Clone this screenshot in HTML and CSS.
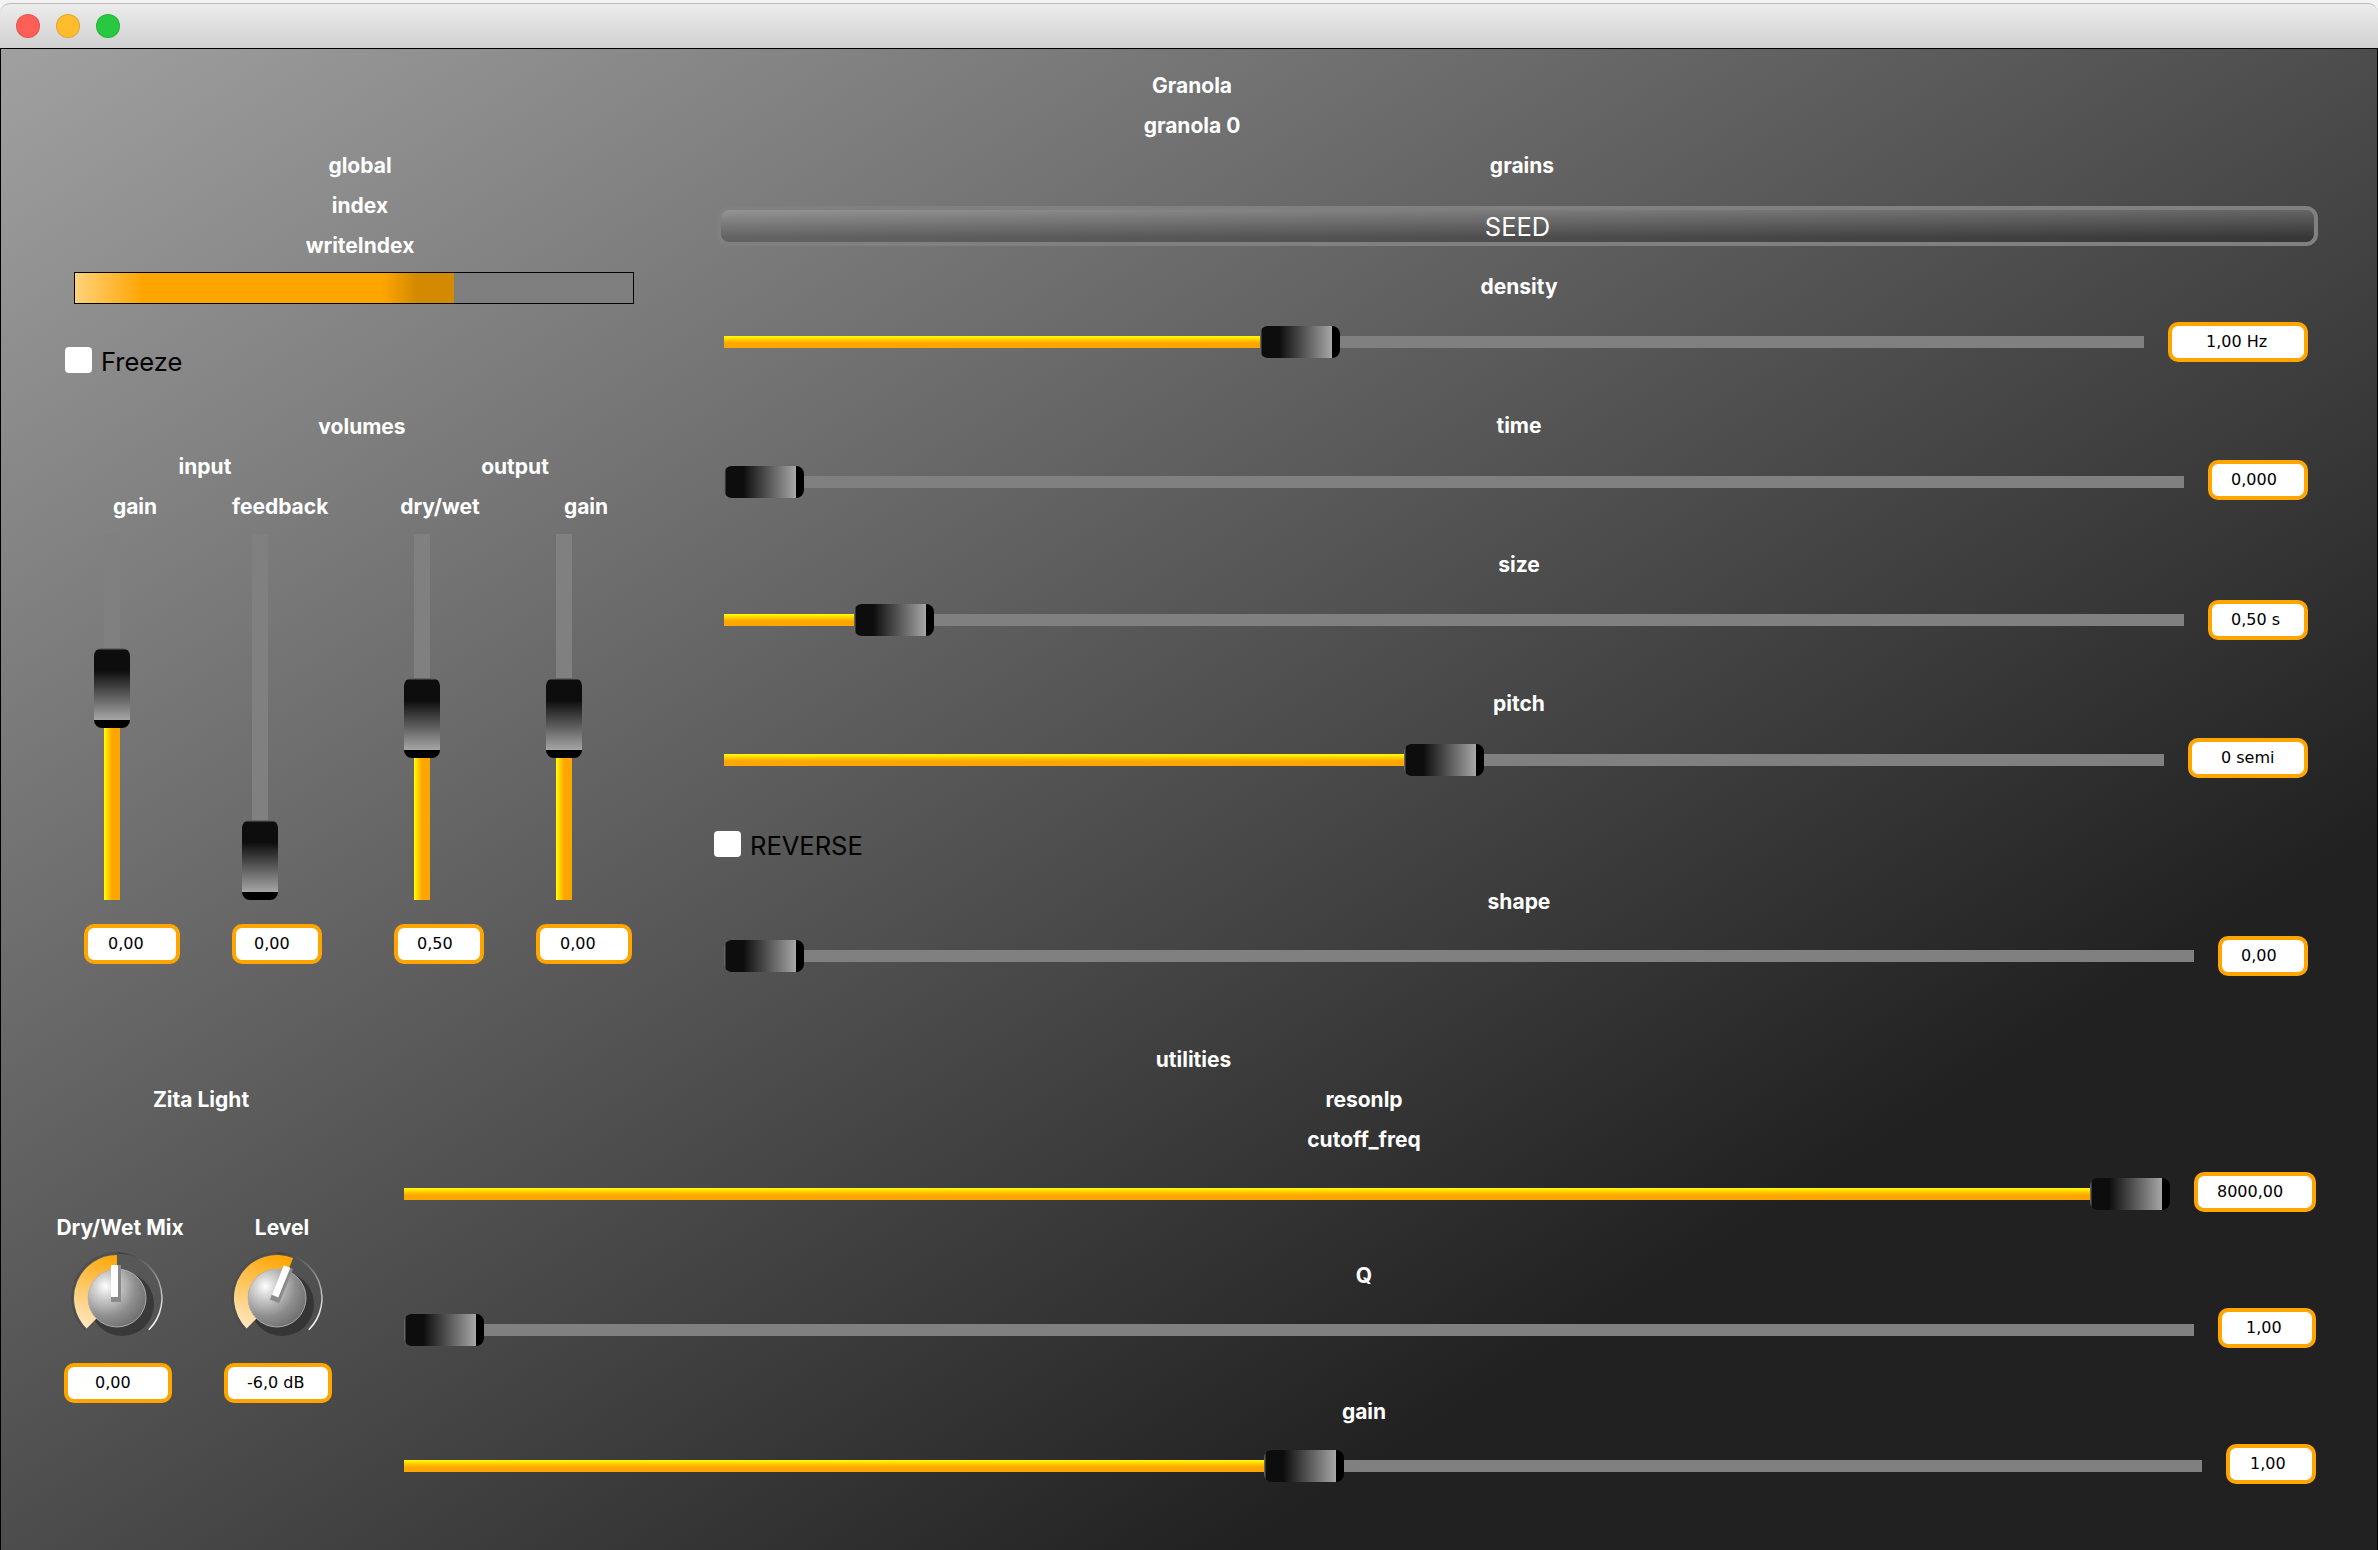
FILE: index.html
```html
<!DOCTYPE html>
<html>
<head>
  <meta charset="UTF-8">
  <title>Granola</title>
  <link rel="stylesheet" href="styles.css">
</head>
<body>
  <div class="titlebar">
    <span class="light light-red"></span>
    <span class="light light-yellow"></span>
    <span class="light light-green"></span>
  </div>

  <div class="panel">
    <div class="label title-label">Granola</div>
    <div class="label title-label">granola 0</div>

    <div class="top">
      <!-- global: buffer position, freeze, volumes -->
      <div class="global">
        <div class="label">global</div>
        <div class="label">index</div>
        <div class="label">writeIndex</div>
        <div class="bar"><div class="bar-fill" style="width:379px"></div></div>
        <div class="check check-freeze"><span class="box"></span>Freeze</div>
        <div class="label volumes-label">volumes</div>

        <div class="volumes">
          <div class="vgroup vgroup-input">
            <div class="label">input</div>
            <div class="vrow">
              <div class="vcol vcol-1">
                <div class="label">gain</div>
                <div class="vslider">
                  <div class="rest"></div>
                  <div class="thumb"></div>
                  <div class="fill" style="height:172px"></div>
                </div>
                <div class="num w-96 inset-24">0,00</div>
              </div>
              <div class="vcol vcol-2">
                <div class="label">feedback</div>
                <div class="vslider">
                  <div class="rest"></div>
                  <div class="thumb"></div>
                </div>
                <div class="num w-90 inset-22">0,00</div>
              </div>
            </div>
          </div>
          <div class="vgroup vgroup-output">
            <div class="label">output</div>
            <div class="vrow">
              <div class="vcol vcol-3">
                <div class="label">dry/wet</div>
                <div class="vslider">
                  <div class="rest"></div>
                  <div class="thumb"></div>
                  <div class="fill" style="height:142px"></div>
                </div>
                <div class="num w-90">0,50</div>
              </div>
              <div class="vcol vcol-4">
                <div class="label">gain</div>
                <div class="vslider">
                  <div class="rest"></div>
                  <div class="thumb"></div>
                  <div class="fill" style="height:142px"></div>
                </div>
                <div class="num w-96 inset-24">0,00</div>
              </div>
            </div>
          </div>
        </div>
      </div>

      <!-- grains -->
      <div class="grains">
        <div class="label grains-label">grains</div>
        <div class="seed">SEED</div>

        <div class="label slider-label">density</div>
        <div class="hslider">
          <div class="fill" style="width:536px"></div>
          <div class="thumb"></div>
          <div class="rest"></div>
          <div class="num w-140 inset-38">1,00 Hz</div>
        </div>

        <div class="label slider-label gap-time">time</div>
        <div class="hslider hslider-low">
          <div class="thumb"></div>
          <div class="rest"></div>
          <div class="num w-100">0,000</div>
        </div>

        <div class="label slider-label gap-size">size</div>
        <div class="hslider">
          <div class="fill" style="width:130px"></div>
          <div class="thumb"></div>
          <div class="rest"></div>
          <div class="num w-100">0,50 s</div>
        </div>

        <div class="label slider-label gap-time">pitch</div>
        <div class="hslider hslider-low">
          <div class="fill" style="width:680px"></div>
          <div class="thumb"></div>
          <div class="rest"></div>
          <div class="num w-120 inset-33">0 semi</div>
        </div>

        <div class="check check-reverse"><span class="box"></span>REVERSE</div>

        <div class="label slider-label gap-shape">shape</div>
        <div class="hslider">
          <div class="thumb"></div>
          <div class="rest"></div>
          <div class="num w-90">0,00</div>
        </div>
      </div>
    </div>

    <div class="label utilities-label">utilities</div>

    <div class="bottom">
      <!-- reverb -->
      <div class="zita">
        <div class="label">Zita Light</div>
        <div class="knobs">
          <div class="knob-col knob-col-1">
            <div class="label">Dry/Wet Mix</div>
            <svg class="knob" viewBox="0 0 100 100">
              <defs>
                <linearGradient id="sweep1" gradientUnits="userSpaceOnUse" x1="18" y1="82" x2="50" y2="6">
                  <stop offset="0" stop-color="#ffe9c6"/>
                  <stop offset="1" stop-color="#ffa500"/>
                </linearGradient>
                <linearGradient id="ring1" gradientUnits="userSpaceOnUse" x1="50" y1="5" x2="82" y2="82">
                  <stop offset="0" stop-color="#3c3c3c"/>
                  <stop offset="1" stop-color="#fff"/>
                </linearGradient>
                <radialGradient id="cap1" cx="0.3" cy="0.3" r="0.8">
                  <stop offset="0" stop-color="#fff"/>
                  <stop offset="0.2" stop-color="#d8d8d8"/>
                  <stop offset="0.65" stop-color="#8e8e8e"/>
                  <stop offset="1" stop-color="#6c6c6c"/>
                </radialGradient>
              </defs>
              <circle cx="55" cy="56" r="32" fill="#000" fill-opacity="0.32"/>
              <path d="M18.2 81.8A45 45 0 0 1 50 5" fill="none" stroke="#4c4c4c" stroke-width="1.5"/>
              <path d="M50 5A45 45 0 0 1 81.8 81.8" fill="none" stroke="url(#ring1)" stroke-width="1.5"/>
              <path d="M19.6 80.4A43 43 0 0 1 50 7V21A29 29 0 0 0 29.5 70.5Z" fill="url(#sweep1)"/>
              <circle cx="50" cy="50" r="29" fill="url(#cap1)" stroke="#bdbdbd" stroke-width="0.8"/>
              <g>
                <rect x="44" y="17" width="10" height="37" fill="#8a8a8a"/>
                <rect x="44" y="17" width="7" height="32" fill="#fff"/>
              </g>
            </svg>
            <div class="num w-108 inset-31 knob-num">0,00</div>
          </div>
          <div class="knob-col knob-col-2">
            <div class="label">Level</div>
            <svg class="knob" viewBox="0 0 100 100">
              <defs>
                <linearGradient id="sweep2" gradientUnits="userSpaceOnUse" x1="18" y1="82" x2="50" y2="6">
                  <stop offset="0" stop-color="#ffe9c6"/>
                  <stop offset="1" stop-color="#ffa500"/>
                </linearGradient>
                <linearGradient id="ring2" gradientUnits="userSpaceOnUse" x1="50" y1="5" x2="82" y2="82">
                  <stop offset="0" stop-color="#3c3c3c"/>
                  <stop offset="1" stop-color="#fff"/>
                </linearGradient>
                <radialGradient id="cap2" cx="0.3" cy="0.3" r="0.8">
                  <stop offset="0" stop-color="#fff"/>
                  <stop offset="0.2" stop-color="#d8d8d8"/>
                  <stop offset="0.65" stop-color="#8e8e8e"/>
                  <stop offset="1" stop-color="#6c6c6c"/>
                </radialGradient>
              </defs>
              <circle cx="55" cy="56" r="32" fill="#000" fill-opacity="0.32"/>
              <path d="M18.2 81.8A45 45 0 0 1 50 5" fill="none" stroke="#4c4c4c" stroke-width="1.5"/>
              <path d="M50 5A45 45 0 0 1 81.8 81.8" fill="none" stroke="url(#ring2)" stroke-width="1.5"/>
              <path d="M19.6 80.4A43 43 0 0 1 66.1 10.1L60.9 23.1A29 29 0 0 0 29.5 70.5Z" fill="url(#sweep2)"/>
              <circle cx="50" cy="50" r="29" fill="url(#cap2)" stroke="#bdbdbd" stroke-width="0.8"/>
              <g transform="rotate(22 50 50)">
                <rect x="44" y="17" width="10" height="37" fill="#8a8a8a"/>
                <rect x="44" y="17" width="7" height="32" fill="#fff"/>
              </g>
            </svg>
            <div class="num w-108 knob-num">-6,0 dB</div>
          </div>
        </div>
      </div>

      <!-- resonlp -->
      <div class="resonlp">
        <div class="label resonlp-label">resonlp</div>
        <div class="label resonlp-label">cutoff_freq</div>
        <div class="hslider hslider-low hslider-cutoff">
          <div class="fill" style="width:1686px"></div>
          <div class="thumb"></div>
          <div class="num w-122">8000,00</div>
        </div>

        <div class="label resonlp-label gap-q">Q</div>
        <div class="hslider hslider-low hslider-q">
          <div class="thumb"></div>
          <div class="rest"></div>
          <div class="num w-98 inset-28">1,00</div>
        </div>

        <div class="label resonlp-label gap-q">gain</div>
        <div class="hslider hslider-low hslider-q">
          <div class="fill" style="width:860px"></div>
          <div class="thumb"></div>
          <div class="rest"></div>
          <div class="num w-90 inset-24">1,00</div>
        </div>
      </div>
    </div>
  </div>
</body>
</html>
```

FILE: styles.css
```css
html, body {
  height: 100%;
  margin: 0;
  overflow: hidden;
  background: #f2f2f2;
}

body {
  display: flex;
  flex-direction: column;
  font-family: Inter, "Liberation Sans", sans-serif;
}

/* window chrome */
.titlebar {
  height: 44px;
  margin-top: 3px;
  padding-left: 16px;
  display: flex;
  align-items: center;
  gap: 16px;
  flex-shrink: 0;
  border-top: 1px solid #bdbdbd;
  border-radius: 10px 10px 0 0;
  background: linear-gradient(#ececec, #d1d1d1);
}

.light {
  width: 24px;
  height: 24px;
  box-sizing: border-box;
  border-radius: 50%;
  border: 1px solid rgba(0, 0, 0, 0.12);
}
.light-red { background: #ff5f57; }
.light-yellow { background: #ffbd2e; }
.light-green { background: #28c940; }

.panel {
  flex: 1;
  padding-top: 16px;
  border: 1px solid #000;
  border-bottom: 0;
  background: linear-gradient(to bottom right, #a0a0a0 0%, #212121 76%);
}

/* text */
.label {
  height: 40px;
  line-height: 41px;
  text-align: center;
  color: #fff;
  font-size: 21px;
  font-weight: 700;
  white-space: nowrap;
}

.title-label { padding-left: 6px; }
.utilities-label { margin-top: 63px; padding-left: 9px; }

/* top half */
.top {
  display: flex;
  padding-left: 63px;
  gap: 68px;
}

.global { width: 592px; }

.bar {
  width: 560px;
  height: 32px;
  margin: 7px 0 0 10px;
  box-sizing: border-box;
  border: 1px solid #000;
  background: #7f7f7f;
}

.bar-fill {
  height: 100%;
  background: linear-gradient(to right, #ffd27a 0%, #ffa500 18%, #ffa500 81%, #d48a00 90%, #d48a00 100%);
}

.check {
  display: flex;
  align-items: flex-start;
  height: 26px;
  color: #000;
  font-size: 25.5px;
  line-height: 30px;
}

.box {
  width: 27px;
  height: 26px;
  margin-right: 9px;
  border-radius: 4px;
  background: #fff;
}

.check-freeze { margin: 43px 0 0 1px; }
.check-reverse { margin: 53px 0 0 -10px; }

.volumes-label { margin-top: 33px; padding-left: 4px; }

.volumes {
  display: flex;
  margin-left: 20px;
}

.vgroup { width: 242px; }
.vgroup-output { margin-left: 68px; }

.vrow { display: flex; }

.vcol-1 { width: 102px; }
.vcol-2 { width: 94px; margin-left: 46px; }
.vcol-3 { width: 92px; }
.vcol-4 { width: 100px; margin-left: 50px; }

/* sliders */
.vslider {
  width: 36px;
  height: 366px;
  margin: 8px 0 24px 10px;
  display: flex;
  flex-direction: column;
  align-items: center;
}

.vslider .rest {
  flex: 1;
  width: 16px;
  background: #808080;
}

.vslider .thumb {
  width: 36px;
  height: 80px;
  background: linear-gradient(to bottom, #7c7c7c 0, #0d0d0d 3%, #0d0d0d 28%, #a6a6a6 90%, #000 90%, #000 100%);
}

.vslider .fill {
  width: 16px;
  background: linear-gradient(to right, #ff0 0, #ffa500 50%);
}

.thumb {
  flex-shrink: 0;
  border-radius: 8px;
}

.hslider {
  display: flex;
  align-items: center;
  height: 40px;
}

.hslider .rest {
  flex: 1;
  height: 12px;
  background: #808080;
}

.hslider .thumb {
  width: 80px;
  height: 32px;
  background: linear-gradient(to right, #7c7c7c 0, #0d0d0d 3%, #0d0d0d 24%, #a6a6a6 90%, #000 90%, #000 100%);
}

.hslider .fill {
  height: 12px;
  flex-shrink: 0;
  background: linear-gradient(to bottom, #ff0 0, #ffa500 60%);
}

.hslider .num { margin-left: 24px; }

/* some rows sit 2px under their number box */
.hslider-low > .fill,
.hslider-low > .thumb,
.hslider-low > .rest { margin-top: 4px; }

/* number boxes */
.num {
  height: 40px;
  flex-shrink: 0;
  box-sizing: border-box;
  padding-left: 19px;
  border: 4px solid #ffa500;
  border-radius: 10px;
  background: #fff;
  color: #000;
  font-family: "DejaVu Sans", sans-serif;
  font-size: 16px;
  line-height: 32px;
  white-space: nowrap;
}

.w-90 { width: 90px; }
.w-96 { width: 96px; }
.w-98 { width: 98px; }
.w-100 { width: 100px; }
.w-108 { width: 108px; }
.w-120 { width: 120px; }
.w-122 { width: 122px; }
.w-140 { width: 140px; }

.inset-22 { padding-left: 18px; }
.inset-24 { padding-left: 20px; }
.inset-28 { padding-left: 24px; }
.inset-31 { padding-left: 27px; }
.inset-33 { padding-left: 29px; }
.inset-38 { padding-left: 34px; }

/* grains */
.grains { width: 1584px; }

.grains-label { padding-left: 12px; }

.seed {
  height: 40px;
  margin: 21px -10px 0 -7px;
  box-sizing: border-box;
  border: 4px solid #808080;
  border-radius: 12px;
  background: linear-gradient(rgba(255, 255, 255, 0.17), rgba(0, 0, 0, 0.2) 85%);
  color: #fff;
  font-size: 25.5px;
  line-height: 34px;
  text-align: center;
}

.slider-label {
  margin-top: 20px;
  margin-bottom: 16px;
  padding-left: 6px;
}

.gap-time { margin-top: 43px; margin-bottom: 15px; }
.gap-size { margin-top: 44px; margin-bottom: 16px; }
.gap-shape { margin-top: 24px; margin-bottom: 15px; }

/* bottom half */
.bottom {
  display: flex;
  padding-left: 55px;
  gap: 58px;
}

.zita { width: 290px; }

.knobs {
  display: flex;
  gap: 34px;
  margin-top: 88px;
}

.knob-col { width: 128px; }

.knob {
  display: block;
  width: 100px;
  height: 100px;
  margin-top: 1px;
  margin-bottom: 1px;
}

.knob-col-1 .knob { margin-left: 11px; }
.knob-col-2 .knob { margin-left: 9px; }

.knob-num { margin-top: 15px; }
.knob-col-1 .knob-num { margin-left: 8px; }
.knob-col-2 .knob-num { margin-left: 6px; }

.resonlp { width: 1912px; }

.resonlp-label { padding-left: 8px; }

.hslider-cutoff { margin-top: 13px; }
.gap-q { margin-top: 43px; }
.hslider-q { margin-top: 13px; }
```
